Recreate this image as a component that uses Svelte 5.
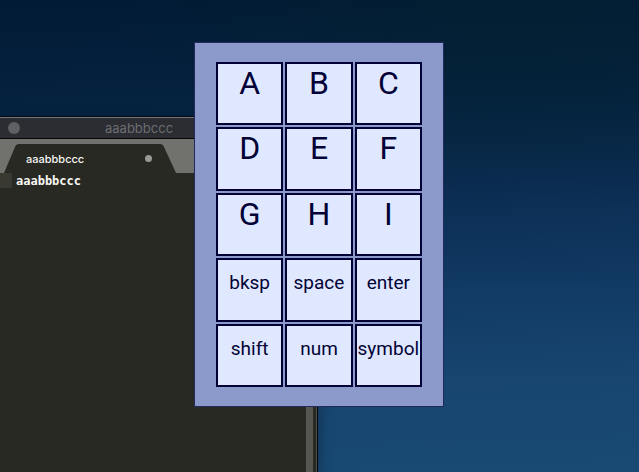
<script>
  const keys = ['A', 'B', 'C', 'D', 'E', 'F', 'G', 'H', 'I', 'bksp', 'space', 'enter', 'shift', 'num', 'symbol'];
  let text = $state('aaabbbccc');

  function press(key) {
    if (key.length === 1) text += key.toLowerCase();
    else if (key === 'bksp') text = text.slice(0, -1);
    else if (key === 'space') text += ' ';
    else if (key === 'enter') text += '\n';
  }
</script>

<main class="desktop">
  <section class="editor">
    <header class="titlebar">
      <span class="light"></span>
      <span class="title">aaabbbccc</span>
    </header>
    <div class="tabs">
      <div class="tab">
        <svg class="shape" viewBox="0 0 172 29" preserveAspectRatio="none" aria-hidden="true">
          <path d="M0 29 L11 3 Q12 0 15 0 H156 Q159 0 160 3 L172 29 Z" fill="#282923" />
        </svg>
        <span class="name">aaabbbccc</span>
        <span class="dirty"></span>
      </div>
    </div>
    <div class="body">
      <span class="gutter"></span>
      <textarea aria-label="Editor text" spellcheck="false" bind:value={text}></textarea>
      <span class="scrollbar"></span>
    </div>
  </section>

  <section class="keypad" aria-label="Keypad">
    {#each keys as key}
      <button class:word={key.length > 1} onclick={() => press(key)}>{key}</button>
    {/each}
  </section>
</main>

<style>
  :global(body) {
    margin: 0;
  }

  .desktop {
    position: relative;
    height: 100vh;
    overflow: hidden;
    background:
      radial-gradient(ellipse 400px 200px at 80% 0%, rgba(2, 34, 44, 0.5), rgba(2, 34, 44, 0)),
      linear-gradient(178deg, #021a36 0%, #05223f 22%, #0b2d52 42%, #113a64 62%, #174570 80%, #184a73 100%);
  }

  .editor {
    position: absolute;
    left: 0;
    top: 116px;
    bottom: 0;
    width: 317px;
    display: flex;
    flex-direction: column;
    border-top: 1px solid #050b14;
    border-right: 1px solid #04080e;
    background: #282923;
    box-shadow: 0 6px 14px rgba(0, 0, 0, 0.35);
  }

  .titlebar {
    display: flex;
    align-items: center;
    height: 20px;
    padding-left: 8px;
    border-top: 1px solid #74767a;
    border-bottom: 1px solid #050505;
    background: #2b2d32;
  }

  .light {
    width: 12px;
    height: 12px;
    border-radius: 50%;
    background: #5e6163;
  }

  .title {
    margin-left: 85px;
    font: 13px/20px Inter, "Liberation Sans", sans-serif;
    color: #6c6e71;
  }

  .tabs {
    flex: none;
    padding: 5px 0 0 4px;
    background: #71726d;
  }

  .tab {
    position: relative;
    display: flex;
    align-items: center;
    justify-content: space-between;
    box-sizing: border-box;
    width: 172px;
    height: 29px;
    padding: 0 24px 0 22px;
  }

  .shape {
    position: absolute;
    inset: 0;
    width: 100%;
    height: 100%;
  }

  .name {
    position: relative;
    font: 500 11px/16px Inter, "Liberation Sans", sans-serif;
    color: #f6f6f3;
  }

  .dirty {
    position: relative;
    width: 7px;
    height: 7px;
    border-radius: 50%;
    background: #989994;
  }

  .body {
    flex: 1;
    display: flex;
    min-height: 0;
    border-right: 1px solid #4c4d48;
  }

  .gutter {
    width: 12px;
    height: 15px;
    background: #393931;
  }

  textarea {
    flex: 1;
    min-width: 0;
    padding: 0 0 0 4px;
    border: 0;
    outline: 0;
    resize: none;
    background: transparent;
    color: #f8f8f2;
    font: bold 12px/16px "DejaVu Sans Mono", monospace;
  }

  .scrollbar {
    width: 7px;
    margin-right: 3px;
    background: #555651;
  }

  .keypad {
    position: absolute;
    left: 194px;
    top: 42px;
    box-sizing: border-box;
    width: 250px;
    min-height: 365px;
    display: grid;
    grid-template-columns: repeat(3, 1fr);
    grid-auto-rows: 1fr;
    gap: 2px;
    padding: 19px 21px;
    border: 1px solid #23295f;
    background: #8b9acb;
  }

  button {
    display: flex;
    align-items: flex-start;
    justify-content: center;
    min-width: 0;
    padding: 0;
    border: 2px solid #020236;
    background: #e0e8ff;
    color: #020236;
    font: 32px/38px Roboto, sans-serif;
  }

  .word {
    font-size: 19px;
    line-height: 46px;
  }
</style>
